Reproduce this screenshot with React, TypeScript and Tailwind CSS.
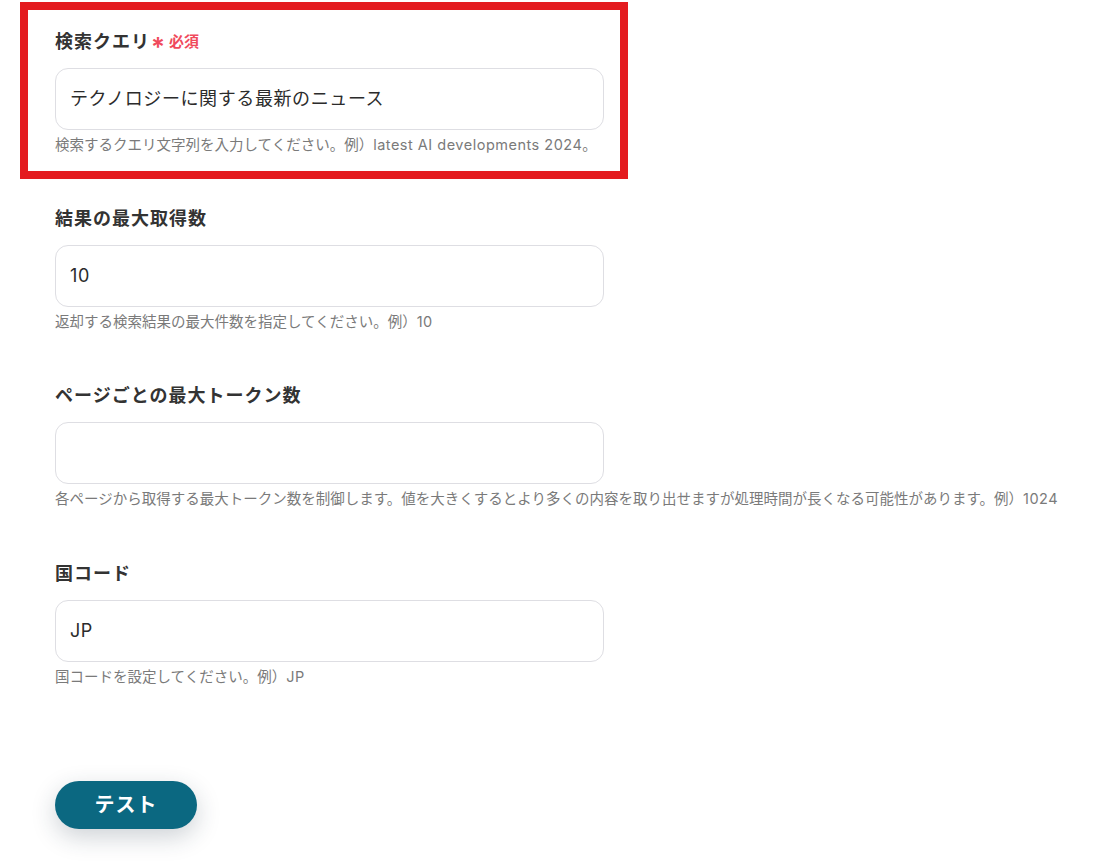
const font = "font-['Inter','Noto_Sans_CJK_JP',sans-serif]";

type FieldProps = {
  label: string;
  value: string;
  help: string;
  required?: boolean;
};

// latin runs in the help text are set a little looser than the Japanese
const HelpText = ({ text }: { text: string }) => {
  const parts = text.split(/([A-Za-z0-9 ]+)/).filter((p) => p !== '');
  return (
    <p className="mt-[5px] whitespace-nowrap text-[14.5px] leading-5 text-[#7a7a7a]">
      {parts.map((p, i) =>
        /^[A-Za-z0-9 ]+$/.test(p) ? (
          <span key={i} className="tracking-[0.5px]">{p}</span>
        ) : (
          <span key={i}>{p}</span>
        ),
      )}
    </p>
  );
};

const Field = ({ label, value, help, required }: FieldProps) => (
  <div className="flex flex-col">
    <div className="flex h-6 items-center">
      <span className="text-[18px] font-semibold leading-6 tracking-[1px] text-[#333333]">{label}</span>
      {required && (
        <>
          <span className="ml-[1px] mt-[10px] text-[26px] font-semibold leading-none text-[#f04a5c]">*</span>
          <span className="ml-[4px] text-[15px] font-semibold leading-6 text-[#f04a5c]">必須</span>
        </>
      )}
    </div>
    <div className="mt-[14px] flex h-[62px] w-[549px] items-center rounded-[13px] border border-[#dedee3] bg-white px-[14px]">
      <span className="text-[18px] leading-6 tracking-[0.6px] text-[#2b2b2b]">{value}</span>
    </div>
    <HelpText text={help} />
  </div>
);

export default function App() {
  return (
    <div className={`min-h-screen bg-white ${font}`}>
      <div className="pt-[2px]">
        <div className="ml-[20px] w-[608px] border-[8px] border-[#e41b1f] pb-[16px] pl-[27px] pt-[20px]">
          <Field
            label="検索クエリ"
            value="テクノロジーに関する最新のニュース"
            help="検索するクエリ文字列を入力してください。例）latest AI developments 2024。"
            required
          />
        </div>
      </div>
      <div className="flex flex-col pl-[55px]">
        <div className="mt-[28px]">
          <Field label="結果の最大取得数" value="10" help="返却する検索結果の最大件数を指定してください。例）10" />
        </div>
        <div className="mt-[52px]">
          <Field
            label="ページごとの最大トークン数"
            value=""
            help="各ページから取得する最大トークン数を制御します。値を大きくするとより多くの内容を取り出せますが処理時間が長くなる可能性があります。例）1024"
          />
        </div>
        <div className="mt-[53px]">
          <Field label="国コード" value="JP" help="国コードを設定してください。例）JP" />
        </div>
        <div className="mt-[94px]">
          <button className="h-[48px] w-[142px] rounded-full bg-[#0b6881] text-[20px] font-bold tracking-[1px] text-white shadow-[0_8px_24px_rgba(30,50,70,0.22)]">
            テスト
          </button>
        </div>
      </div>
    </div>
  );
}
